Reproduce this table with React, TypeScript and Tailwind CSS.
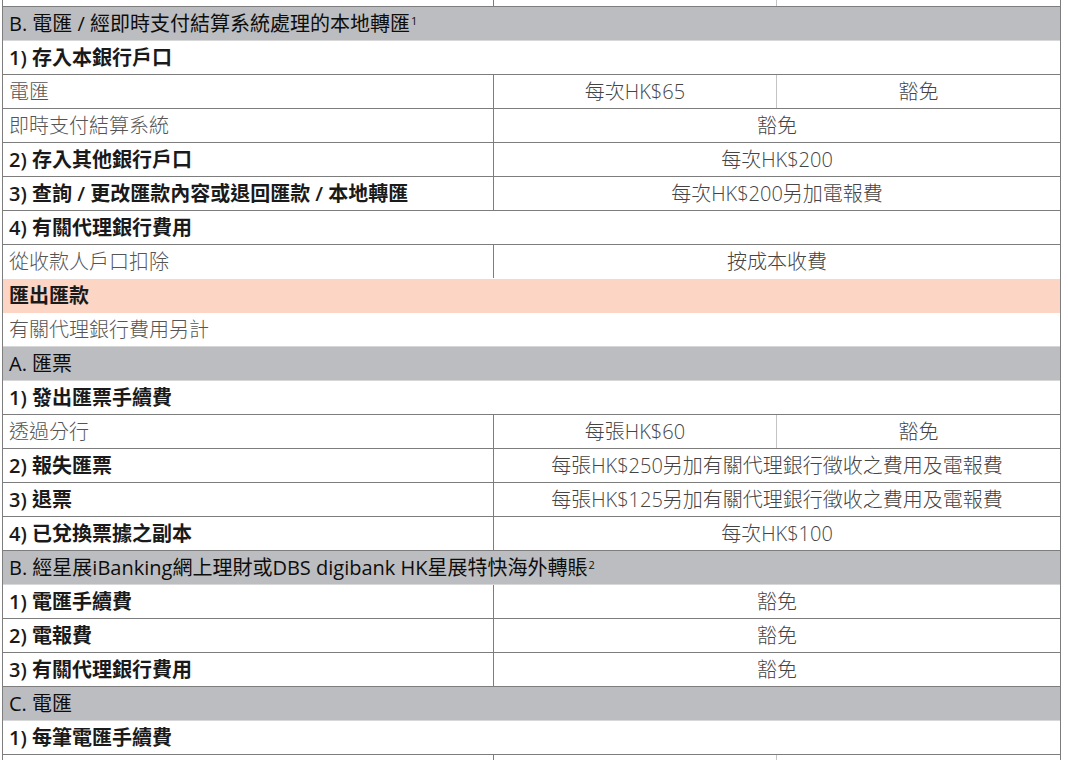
import React from 'react'

type Row =
  | { kind: 'head'; text: React.ReactNode; line?: string }
  | { kind: 'peach'; text: string }
  | { kind: 'title'; text: string; line?: string }
  | { kind: 'note'; text: string; line?: string }
  | { kind: 'one'; label: string; bold?: boolean; value: string; line?: string }
  | { kind: 'two'; label: string; bold?: boolean; a: string; b: string; line?: string }

const DARK = 'border-[#7d7d7d]'

const rows: Row[] = [
  {
    kind: 'head',
    text: (
      <>
        B. 電匯 / 經即時支付結算系統處理的本地轉匯<sup className="text-[11px] ml-[1px]">1</sup>
      </>
    ),
  },
  { kind: 'title', text: '1) 存入本銀行戶口' },
  { kind: 'two', label: '電匯', a: '每次HK$65', b: '豁免' },
  { kind: 'one', label: '即時支付結算系統', value: '豁免' },
  { kind: 'one', label: '2) 存入其他銀行戶口', bold: true, value: '每次HK$200' },
  { kind: 'one', label: '3) 查詢 / 更改匯款內容或退回匯款 / 本地轉匯', bold: true, value: '每次HK$200另加電報費' },
  { kind: 'title', text: '4) 有關代理銀行費用' },
  { kind: 'one', label: '從收款人戶口扣除', value: '按成本收費', line: 'border-transparent' },
  { kind: 'peach', text: '匯出匯款' },
  { kind: 'note', text: '有關代理銀行費用另計', line: 'border-[#d6d6d6]' },
  { kind: 'head', text: 'A. 匯票' },
  { kind: 'title', text: '1) 發出匯票手續費' },
  { kind: 'two', label: '透過分行', a: '每張HK$60', b: '豁免' },
  { kind: 'one', label: '2) 報失匯票', bold: true, value: '每張HK$250另加有關代理銀行徵收之費用及電報費' },
  { kind: 'one', label: '3) 退票', bold: true, value: '每張HK$125另加有關代理銀行徵收之費用及電報費' },
  { kind: 'one', label: '4) 已兌換票據之副本', bold: true, value: '每次HK$100' },
  {
    kind: 'head',
    text: (
      <>
        B. 經星展iBanking網上理財或DBS digibank HK星展特快海外轉賬<sup className="text-[11px] ml-[1px]">2</sup>
      </>
    ),
  },
  { kind: 'one', label: '1) 電匯手續費', bold: true, value: '豁免' },
  { kind: 'one', label: '2) 電報費', bold: true, value: '豁免' },
  { kind: 'one', label: '3) 有關代理銀行費用', bold: true, value: '豁免' },
  { kind: 'head', text: 'C. 電匯' },
  { kind: 'title', text: '1) 每筆電匯手續費' },
]

function Label({ text, bold }: { text: string; bold?: boolean }) {
  return (
    <div
      className={
        'w-[490px] shrink-0 pl-[6px] whitespace-nowrap ' +
        (bold ? 'font-semibold text-[#1a1a1a]' : 'font-light text-[#555]')
      }
    >
      {text}
    </div>
  )
}

function TableRow({ row }: { row: Row }) {
  if (row.kind === 'head') {
    return (
      <div className="h-[34px] flex items-center bg-[#bcbdc0] border-b border-[#d8d8d8] pl-[6px] text-[#0d0d0d]">
        <span>{row.text}</span>
      </div>
    )
  }
  if (row.kind === 'peach') {
    return (
      <div className="h-[34px] flex items-center bg-[#fcd5c4] pl-[6px] font-semibold text-[#1a1a1a]">
        {row.text}
      </div>
    )
  }
  const line = row.line ?? DARK
  if (row.kind === 'title' || row.kind === 'note') {
    return (
      <div className={'h-[34px] flex items-center border-b ' + line}>
        <Label text={row.text} bold={row.kind === 'title'} />
      </div>
    )
  }
  if (row.kind === 'one') {
    return (
      <div className={'h-[34px] flex items-stretch border-b ' + line}>
        <div className="flex items-center">
          <Label text={row.label} bold={row.bold} />
        </div>
        <div className={'flex-1 flex items-center justify-center border-l font-light text-[#444] ' + DARK}>
          {row.value}
        </div>
      </div>
    )
  }
  return (
    <div className={'h-[34px] flex items-stretch border-b ' + line}>
      <div className="flex items-center">
        <Label text={row.label} bold={row.bold} />
      </div>
      <div className={'flex-1 flex border-l font-light text-[#444] ' + DARK}>
        <div className="w-[282px] flex items-center justify-center">{row.a}</div>
        <div className="flex-1 flex items-center justify-center border-l border-[#c4c4c4]">{row.b}</div>
      </div>
    </div>
  )
}

function Stub({ height, split }: { height: string; split?: boolean }) {
  return (
    <div className={'flex ' + height}>
      <div className="w-[490px] shrink-0" />
      <div className={'flex-1 flex border-l ' + DARK}>
        <div className="w-[282px]" />
        {split && <div className="flex-1 border-l border-[#c4c4c4]" />}
      </div>
    </div>
  )
}

export default function App() {
  return (
    <div className="w-[1068px] h-[760px] overflow-hidden bg-white font-['Open_Sans','Noto_Sans_CJK_TC',sans-serif] text-[20px] leading-[26px]">
      <div className={'ml-[2px] w-[1059px] border-x ' + DARK}>
        <div className={'border-b ' + DARK}>
          <Stub height="h-[6px]" split />
        </div>
        {rows.map((r, i) => (
          <TableRow key={i} row={r} />
        ))}
        <Stub height="h-[10px]" split />
      </div>
    </div>
  )
}
